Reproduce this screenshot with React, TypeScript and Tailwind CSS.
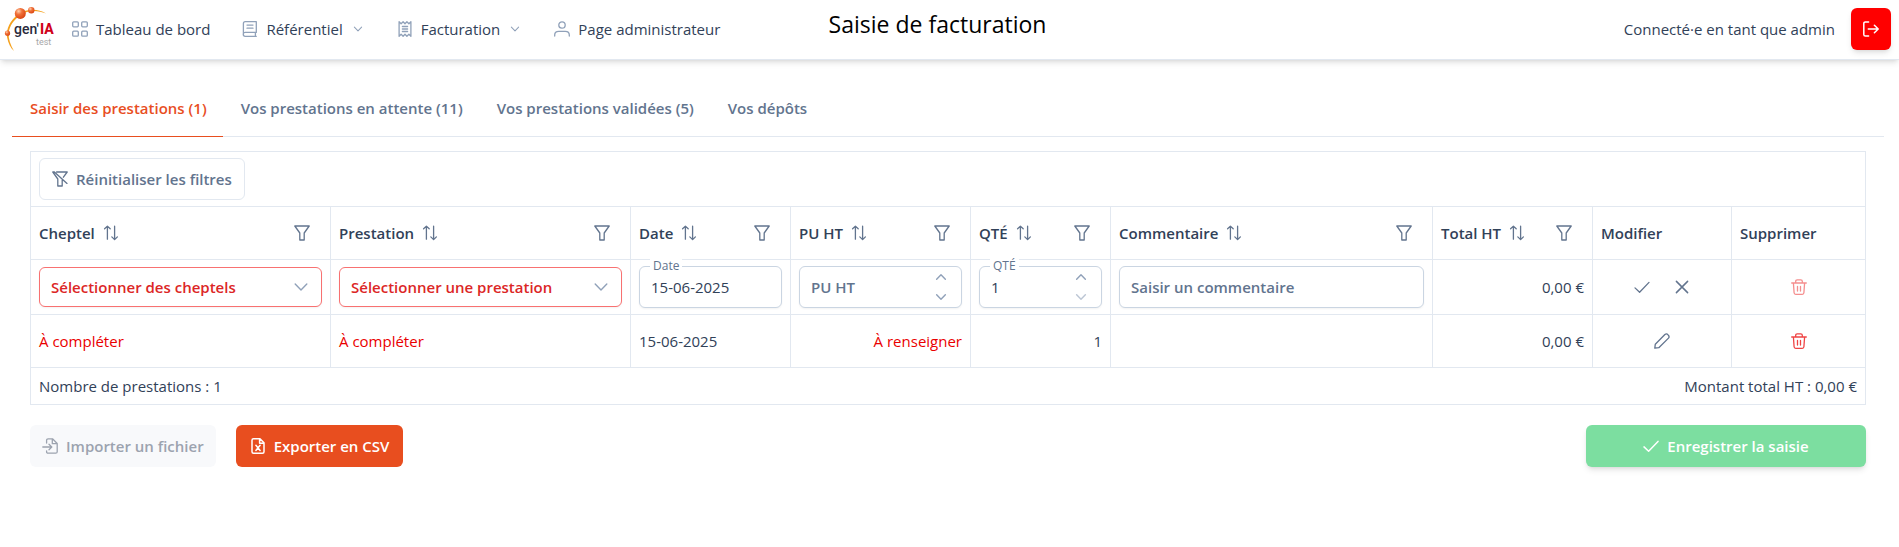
import type { ReactNode } from 'react';

type IconProps = { className?: string; d: string; size?: number; sw?: number };

function Icon({ className = '', d, size = 16, sw = 1.3 }: IconProps) {
  return (
    <svg
      className={className}
      width={size}
      height={size}
      viewBox="0 0 16 16"
      fill="none"
      stroke="currentColor"
      strokeWidth={sw}
      strokeLinecap="round"
      strokeLinejoin="round"
      aria-hidden="true"
    >
      <path d={d} />
    </svg>
  );
}

const paths = {
  grid: 'M1.7 .8h3.6q1 0 1 1v3q0 1-1 1H1.7q-1 0-1-1v-3q0-1 1-1zM10.7 .8h3.6q1 0 1 1v3q0 1-1 1h-3.6q-1 0-1-1v-3q0-1 1-1zM1.7 10.2h3.6q1 0 1 1v3q0 1-1 1H1.7q-1 0-1-1v-3q0-1 1-1zM10.7 10.2h3.6q1 0 1 1v3q0 1-1 1h-3.6q-1 0-1-1v-3q0-1 1-1z',
  book: 'M14.3 11.4H3.2a1.9 1.9 0 0 0 0 3.9h11.1M1.4 13.2V2.6A1.9 1.9 0 0 1 3.3 .7h11v10.7M13.4 11.6v3.5M5 4.1h6M5 7.2h6',
  receipt: 'M2.1 .8v14.4M13.9 .8v14.4M2.1 .8l2 2 2-2 1.9 2 1.9-2 2 2 2-2M2.1 15.2l2-2 2 2 1.900-2 1.900 2 2-2 2 2M5.400 5.500h5.200M5.400 8h5.200M5.400 10.500h5.200',
  user: 'M8 .8a3.2 3.2 0 1 1 0 6.4A3.2 3.2 0 0 1 8 .8zM.7 15v-.9q0-3.7 4-3.7h6.6q4 0 4 3.7v.9',
  down: 'M2.2 5l5.8 5.9L13.8 5',
  up: 'M2.2 10.9L8 5l5.8 5.9',
  signOut: 'M5.6 15H2.4q-1.6 0-1.6-1.6V2.6Q.8 1 2.4 1h3.2M5.3 8h9.8M11.4 4.2L15.2 8l-3.8 3.8',
  filter: 'M.8 1h14.4L10.2 8v7H5.8V8z',
  filterSlash: 'M4.6 1h10.6l-3.8 5.2M.8 1l5 7v7h4.4V9.2M.8 1h1.6l12.6 11.4',
  sort: 'M4.4 14.2V1.2M1.6 3.8L4.4 1.1 7.2 3.8M11.6 1.2v13.2M8.8 11.9l2.8 2.7 2.8-2.7',
  check: 'M1 8.9l4.6 4.3L15 3.4',
  times: 'M2.4 2.4l11.2 11.2M13.6 2.4L2.4 13.6',
  trash: 'M.7 4h14.6M2.4 4l.7 9.8q.1 1.5 1.6 1.5h6.6q1.500 0 1.600-1.500L13.600 4M4.700 4V2.300Q4.700 .8 6.200 .8h3.600q1.500 0 1.500 1.500V4M6.500 7.500v4.500M9.500 7.500v4.500',
  pencil: 'M.8 15.200l.5-4L10.900 1.500q1.700-1.300 3.200 .4 1.700 1.500 .4 3.200L4.800 14.700z',
  fileImport: 'M4.600 5V2.300Q4.600 .8 6.100 .8h4.400L15.200 5.500v8.200q0 1.500-1.500 1.500H6.100q-1.500 0-1.500-1.500v-.9M10.300 1v4.700h4.700M.8 9h8.800M7 6.200L9.800 9 7 11.800',
  fileExcel: 'M10 .8H3.500Q2 .8 2 2.300v11.400q0 1.500 1.500 1.500h9q1.500 0 1.500-1.500V4.800zM9.600 1v4.200h4.200M5.900 7.300l4.200 5.200M10.100 7.300l-4.200 5.200',
};

function Logo() {
  return (
    <svg width="50" height="46" viewBox="4 6 50 46" role="img" aria-label="gen'IA test" className="shrink-0">
      <defs>
        <radialGradient id="ball" cx="35%" cy="30%" r="75%">
          <stop offset="0" stopColor="#ffd2b0" />
          <stop offset="0.4" stopColor="#f0713a" />
          <stop offset="1" stopColor="#d9430f" />
        </radialGradient>
      </defs>
      <path d="M46 13.500C38 8.500 27 8.500 18.500 14C10 20.500 6 29 7 37C8.300 43.500 10.500 48 14 51C10.500 45 8.300 39 8.600 33C9.600 26 13.500 20 20 15.500C28 10 37 10 46 13.500z" fill="#f5a11d" />
      <circle cx="20.300" cy="13.400" r="5.500" fill="url(#ball)" />
      <circle cx="31.300" cy="10.200" r="3.200" fill="url(#ball)" />
      <circle cx="7.500" cy="33.200" r="2.600" fill="url(#ball)" />
      <text x="14" y="34" fontSize="14" fontWeight="500" fill="#2a2a3c" fontFamily="Roboto, sans-serif">gen'</text>
      <text x="40" y="34" fontSize="14" fontWeight="800" fill="#d0021b" fontFamily="Roboto, sans-serif">IA</text>
      <text x="36" y="45" fontSize="9" fill="#a8a8a8" fontFamily="Roboto, sans-serif">test</text>
    </svg>
  );
}

function NavItem({ icon, label, menu = false }: { icon: string; label: string; menu?: boolean }) {
  return (
    <a href="#" className="flex items-center gap-2 px-3 py-2 text-slate-700">
      <Icon d={icon} className="text-slate-400" />
      <span>{label}</span>
      {menu && <Icon d={paths.down} size={14} sw={1.7} className="p-0.5 text-slate-400" />}
    </a>
  );
}

function HeadCell({ label, sortable = true }: { label: string; sortable?: boolean }) {
  return (
    <th scope="col" className="h-[53px] border-r border-b border-slate-200 px-2 text-left font-semibold text-slate-700">
      <div className="flex items-center">
        <span>{label}</span>
        {sortable && (
          <>
            <button type="button" aria-label={`Trier par ${label}`} className="ml-2 text-slate-500">
              <Icon d={paths.sort} sw={1.3} />
            </button>
            <button type="button" aria-label={`Filtrer par ${label}`} className="ml-auto flex h-10 w-10 items-center justify-center text-slate-500">
              <Icon d={paths.filter} />
            </button>
          </>
        )}
      </div>
    </th>
  );
}

function Cell({ children, className = '' }: { children?: ReactNode; className?: string }) {
  return <td className={`border-r border-b border-slate-200 px-2 ${className}`}>{children}</td>;
}

function SelectField({ label }: { label: string }) {
  return (
    <div className="relative">
      <select
        aria-label={label}
        className="block h-10 w-full appearance-none rounded-md border border-[#f87171] bg-white px-[11px] font-semibold text-[#dc2626] shadow-xs"
      >
        <option>{label}</option>
      </select>
      <Icon d={paths.down} sw={1.4} className="pointer-events-none absolute top-3 right-[13px] text-slate-400" />
    </div>
  );
}

const inputClass = 'block h-[42px] w-full rounded-md border border-slate-300 bg-white px-[11px] shadow-xs placeholder:font-semibold placeholder:text-slate-500 placeholder:opacity-100';

function FloatLabel({ id, children }: { id: string; children: ReactNode }) {
  return (
    <label htmlFor={id} className="absolute -top-2 left-[11px] bg-white px-[3px] text-xs leading-4 text-slate-500">
      {children}
    </label>
  );
}

function Spinner({ atMin = false }: { atMin?: boolean }) {
  return (
    <div className="absolute inset-y-px right-px flex w-10 flex-col text-slate-400">
      <button type="button" aria-label="Augmenter" className="flex flex-1 items-center justify-center">
        <Icon d={paths.up} size={12} sw={1.9} />
      </button>
      <button type="button" aria-label="Diminuer" disabled={atMin} className="flex flex-1 items-center justify-center disabled:opacity-60">
        <Icon d={paths.down} size={12} sw={1.9} />
      </button>
    </div>
  );
}

function IconButton({ label, d, className = 'text-slate-500', disabled = false, sw = 1.3 }: { label: string; d: string; className?: string; disabled?: boolean; sw?: number }) {
  return (
    <button type="button" aria-label={label} disabled={disabled} className={`flex h-10 w-10 items-center justify-center disabled:opacity-60 ${className}`}>
      <Icon d={d} sw={sw} />
    </button>
  );
}

const tabs = ['Saisir des prestations (1)', 'Vos prestations en attente (11)', 'Vos prestations validées (5)', 'Vos dépôts'];

export default function App() {
  return (
    <div className="min-h-screen bg-white text-[15px] leading-6 text-slate-700 [font-family:'Segoe_UI','Open_Sans',sans-serif]">
      <header className="grid grid-cols-[1fr_auto_1fr] items-center border-b border-slate-200 pt-1.5 pr-2 pb-[7px] pl-1 shadow-md">
        <div className="flex items-center gap-1.5">
          <Logo />
          <nav className="flex items-center gap-2">
            <NavItem icon={paths.grid} label="Tableau de bord" />
            <NavItem icon={paths.book} label="Référentiel" menu />
            <NavItem icon={paths.receipt} label="Facturation" menu />
            <NavItem icon={paths.user} label="Page administrateur" />
          </nav>
        </div>
        <h1 className="mr-5 mb-2.5 text-[23px] leading-8 text-black">Saisie de facturation</h1>
        <div className="flex items-center justify-end gap-4">
          <span>Connecté·e en tant que admin</span>
          <button type="button" aria-label="Se déconnecter" className="flex h-[42px] w-10 items-center justify-center rounded-md bg-[#ff0000] text-white shadow-md">
            <Icon d={paths.signOut} sw={1.5} />
          </button>
        </div>
      </header>

      <main className="px-3 pt-5">
        <div role="tablist" className="mr-[3px] flex border-b border-slate-200">
          {tabs.map((tab, i) => (
            <button
              key={tab}
              type="button"
              role="tab"
              aria-selected={i === 0}
              className={`-mb-px border-b py-4 pr-4 pl-[18px] font-semibold ${i === 0 ? 'border-[#e84e1f] text-[#e84e1f]' : 'border-transparent text-slate-500'}`}
            >
              {tab}
            </button>
          ))}
        </div>

        <section className="mr-[21px] ml-[18px] pt-[14px]">
          <div className="border-t border-l border-slate-200">
            <div className="border-r border-b border-slate-200 px-2 py-1.5">
              <button type="button" className="flex h-[42px] items-center gap-2 rounded-md border border-slate-200 px-3 font-semibold text-slate-500">
                <Icon d={paths.filterSlash} />
                Réinitialiser les filtres
              </button>
            </div>
            <table className="w-full table-fixed border-separate border-spacing-0">
              <colgroup>
                <col className="w-[300px]" />
                <col className="w-[300px]" />
                <col className="w-[160px]" />
                <col className="w-[180px]" />
                <col className="w-[140px]" />
                <col />
                <col className="w-[160px]" />
                <col className="w-[139px]" />
                <col className="w-[134px]" />
              </colgroup>
              <thead>
                <tr>
                  <HeadCell label="Cheptel" />
                  <HeadCell label="Prestation" />
                  <HeadCell label="Date" />
                  <HeadCell label="PU HT" />
                  <HeadCell label="QTÉ" />
                  <HeadCell label="Commentaire" />
                  <HeadCell label="Total HT" />
                  <HeadCell label="Modifier" sortable={false} />
                  <HeadCell label="Supprimer" sortable={false} />
                </tr>
              </thead>
              <tbody>
                <tr className="h-[55px]">
                  <Cell><SelectField label="Sélectionner des cheptels" /></Cell>
                  <Cell><SelectField label="Sélectionner une prestation" /></Cell>
                  <Cell>
                    <div className="relative">
                      <input id="date" type="text" defaultValue="15-06-2025" className={inputClass} />
                      <FloatLabel id="date">Date</FloatLabel>
                    </div>
                  </Cell>
                  <Cell>
                    <div className="relative">
                      <input type="text" aria-label="PU HT" placeholder="PU HT" className={inputClass} />
                      <Spinner />
                    </div>
                  </Cell>
                  <Cell>
                    <div className="relative">
                      <input id="qte" type="text" defaultValue="1" className={inputClass} />
                      <FloatLabel id="qte">QTÉ</FloatLabel>
                      <Spinner atMin />
                    </div>
                  </Cell>
                  <Cell>
                    <input type="text" aria-label="Commentaire" placeholder="Saisir un commentaire" className={inputClass} />
                  </Cell>
                  <Cell className="text-right">0,00 €</Cell>
                  <Cell>
                    <div className="flex justify-center">
                      <IconButton label="Valider" d={paths.check} />
                      <IconButton label="Annuler" d={paths.times} sw={1.5} />
                    </div>
                  </Cell>
                  <Cell>
                    <div className="flex justify-center">
                      <IconButton label="Supprimer" d={paths.trash} className="text-[#ef4444]" disabled />
                    </div>
                  </Cell>
                </tr>
                <tr className="h-[53px]">
                  <Cell className="text-[#ea0000]">À compléter</Cell>
                  <Cell className="text-[#ea0000]">À compléter</Cell>
                  <Cell>15-06-2025</Cell>
                  <Cell className="text-right text-[#ea0000]">À renseigner</Cell>
                  <Cell className="text-right">1</Cell>
                  <Cell />
                  <Cell className="text-right">0,00 €</Cell>
                  <Cell>
                    <div className="flex justify-center">
                      <IconButton label="Modifier la ligne" d={paths.pencil} />
                    </div>
                  </Cell>
                  <Cell>
                    <div className="flex justify-center">
                      <IconButton label="Supprimer la ligne" d={paths.trash} className="text-[#ef4444]" />
                    </div>
                  </Cell>
                </tr>
              </tbody>
            </table>
            <div className="flex justify-between border-r border-b border-slate-200 px-2 py-1.5">
              <span>Nombre de prestations : 1</span>
              <span>Montant total HT : 0,00 €</span>
            </div>
          </div>

          <div className="mt-5 flex items-center gap-5 font-semibold">
            <button type="button" disabled className="flex h-[42px] items-center gap-2 rounded-md bg-[#f8f9fb] px-3 text-[#9ca3af]">
              <Icon d={paths.fileImport} />
              Importer un fichier
            </button>
            <button type="button" className="flex h-[42px] items-center gap-2 rounded-md bg-[#e84e1f] px-[14px] text-white">
              <Icon d={paths.fileExcel} sw={1.5} />
              Exporter en CSV
            </button>
            <button type="button" disabled className="ml-auto flex h-[42px] w-[280px] items-center justify-center gap-2 rounded-md bg-[#7cdea0] text-white shadow-md">
              <Icon d={paths.check} sw={1.5} />
              Enregistrer la saisie
            </button>
          </div>
        </section>
      </main>
    </div>
  );
}
